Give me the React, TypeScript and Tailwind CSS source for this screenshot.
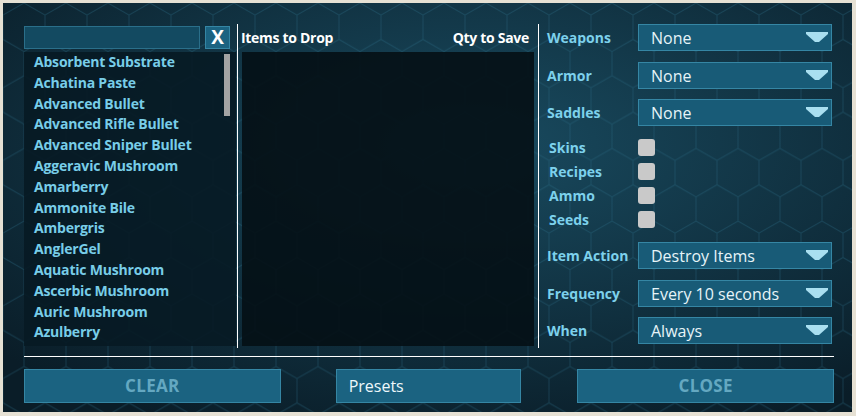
const items = [
  "Absorbent Substrate",
  "Achatina Paste",
  "Advanced Bullet",
  "Advanced Rifle Bullet",
  "Advanced Sniper Bullet",
  "Aggeravic Mushroom",
  "Amarberry",
  "Ammonite Bile",
  "Ambergris",
  "AnglerGel",
  "Aquatic Mushroom",
  "Ascerbic Mushroom",
  "Auric Mushroom",
  "Azulberry",
];

const HexBackground = () => (
  <svg className="absolute inset-0 h-full w-full" xmlns="http://www.w3.org/2000/svg">
    <defs>
      <radialGradient id="glow" cx="0.55" cy="0.35" r="0.75">
        <stop offset="0" stopColor="#194b60" />
        <stop offset="1" stopColor="#0a1d28" />
      </radialGradient>
      <pattern id="hex" width="42" height="72.7" patternUnits="userSpaceOnUse">
        <path
          d="M21 0 L42 12.1 L42 36.4 L21 48.5 L0 36.4 L0 12.1 Z M21 48.5 L21 72.7"
          fill="none"
          stroke="#2b6d85"
          strokeOpacity="0.35"
          strokeWidth="1"
        />
      </pattern>
    </defs>
    <rect width="100%" height="100%" fill="url(#glow)" />
    <rect width="100%" height="100%" fill="url(#hex)" />
  </svg>
);

const Caret = () => (
  <svg width="22" height="11" viewBox="0 0 22 11">
    <polygon points="0,0 22,0 22,2 13,10 9,10 0,2" fill="#a9dff0" />
  </svg>
);

const Dropdown = ({ value }: { value: string }) => (
  <div className="flex h-[27px] w-[194px] items-center justify-between border border-[#3586a4] bg-[#185b77] pl-[12px] pr-[3px] text-[16px] text-[#e6f4f8]">
    <span>{value}</span>
    <Caret />
  </div>
);

const Row = ({ label, children, className = "" }: { label: string; children: React.ReactNode; className?: string }) => (
  <div className={`flex items-center ${className}`}>
    <span className="w-[91px] text-[14px] font-bold text-[#7dd1ec]">{label}</span>
    {children}
  </div>
);

const Check = ({ label, className = "" }: { label: string; className?: string }) => (
  <div className={`flex h-[24px] items-center ${className}`}>
    <span className="w-[91px] pl-[2px] text-[14px] font-bold text-[#7dd1ec]">{label}</span>
    <div className="h-[17px] w-[17px] rounded-[3px] bg-[#c9c9c9]" />
  </div>
);

export default function App() {
  return (
    <div className="h-[416px] w-[856px] bg-[#e6e1d4] p-[3px]" style={{ fontFamily: '"Open Sans", "Noto Sans", sans-serif' }}>
      <div className="relative h-[409px] w-[849px] overflow-hidden">
        <HexBackground />
        <div className="relative flex h-full flex-col pl-[21px] pr-[18px] pt-[21px]">
          <div className="flex h-[324px]">
            {/* left list */}
            <div className="flex w-[214px] flex-col border-r border-white pr-[1px]">
              <div className="mt-[2px] flex h-[23px] gap-[5px]">
                <div className="h-full w-[176px] border border-[#2a6f8a] bg-[#134a61]" />
                <div className="flex h-full w-[25px] items-center justify-center border border-[#3586a4] bg-[#1b6381] text-[19px] font-bold leading-none text-white">
                  X
                </div>
              </div>
              <div className="mt-[3px] flex h-[294px] bg-[#071923]/90">
                <ul className="flex flex-1 flex-col pl-[10px]">
                  {items.map((it) => (
                    <li key={it} className="h-[20.8px] text-[14px] font-bold leading-[20.8px] tracking-[-0.2px] text-[#78cde8]">
                      {it}
                    </li>
                  ))}
                </ul>
                <div className="mr-[6px] mt-[2px] h-[62px] w-[6px] bg-[#a3a3a3]" />
              </div>
            </div>
            {/* middle */}
            <div className="flex w-[301px] flex-col border-r border-white pl-[3px] pr-[4px]">
              <div className="flex h-[28px] items-center justify-between pb-[2px] pr-[5px] text-[14px] font-bold tracking-[-0.3px] text-white">
                <span>Items to Drop</span>
                <span>Qty to Save</span>
              </div>
              <div className="ml-[1px] h-[294px] bg-[#040f15]/90" />
            </div>
            {/* right */}
            <div className="flex flex-1 flex-col pl-[8px]">
              <Row label="Weapons">
                <Dropdown value="None" />
              </Row>
              <Row label="Armor" className="mt-[11px]">
                <Dropdown value="None" />
              </Row>
              <Row label="Saddles" className="mt-[10px]">
                <Dropdown value="None" />
              </Row>
              <Check label="Skins" className="mt-[9px]" />
              <Check label="Recipes" />
              <Check label="Ammo" />
              <Check label="Seeds" />
              <Row label="Item Action" className="mt-[11px]">
                <Dropdown value="Destroy Items" />
              </Row>
              <Row label="Frequency" className="mt-[11px]">
                <Dropdown value="Every 10 seconds" />
              </Row>
              <Row label="When" className="mt-[10px]">
                <Dropdown value="Always" />
              </Row>
            </div>
          </div>
          <div className="mt-[8px] h-[1px] w-[810px] bg-white" />
          <div className="mt-[12px] flex h-[34px] items-stretch">
            <div className="flex w-[257px] items-center justify-center border border-[#3586a4] bg-[#1b6381] text-[17px] font-bold tracking-[0.3px] text-[#64a8c1]">
              CLEAR
            </div>
            <div className="ml-[55px] flex w-[186px] items-center border border-[#3586a4] bg-[#1b6381] pl-[12px] text-[16px] text-[#eef8fb]">
              Presets
            </div>
            <div className="ml-[56px] flex w-[257px] items-center justify-center border border-[#3586a4] bg-[#1b6381] text-[17px] font-bold tracking-[0.3px] text-[#64a8c1]">
              CLOSE
            </div>
          </div>
        </div>
      </div>
    </div>
  );
}
